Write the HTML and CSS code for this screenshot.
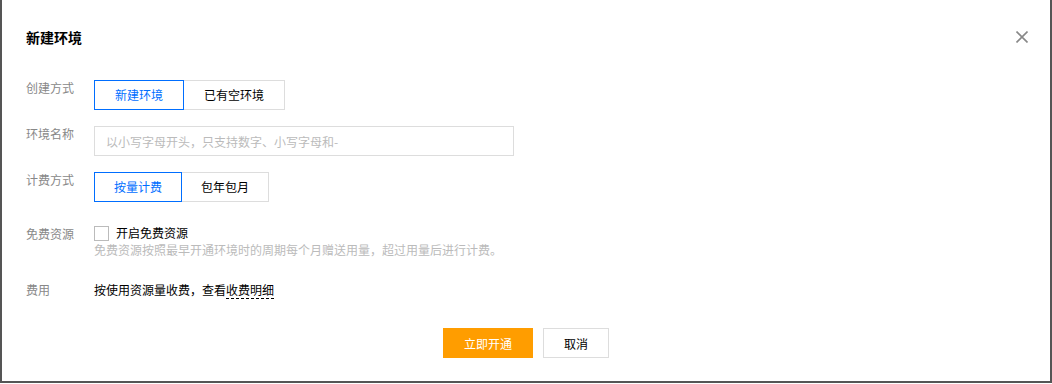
FILE: index.html
```html
<!DOCTYPE html>
<html>
<head>
    <meta charset="utf-8">
    <title>新建环境</title>
    <link rel="stylesheet" href="styles.css">
</head>
<body>
    <div class="dialog">
        <div class="dialog-head">
            <h3 class="dialog-title">新建环境</h3>
            <span class="dialog-close">
                <svg width="12" height="12" viewBox="0 0 12 12"><path d="M0.5 0.5 L11.5 11.5 M11.5 0.5 L0.5 11.5" stroke="#888" stroke-width="1.6" fill="none"/></svg>
            </span>
        </div>

        <div class="form">
            <div class="form-row">
                <label class="form-label">创建方式</label>
                <div class="form-ctrl">
                    <div class="seg seg-wide">
                        <button class="seg-btn active">新建环境</button>
                        <button class="seg-btn">已有空环境</button>
                    </div>
                </div>
            </div>

            <div class="form-row">
                <label class="form-label">环境名称</label>
                <div class="form-ctrl">
                    <input class="text-input" type="text" placeholder="以小写字母开头，只支持数字、小写字母和-">
                </div>
            </div>

            <div class="form-row">
                <label class="form-label">计费方式</label>
                <div class="form-ctrl">
                    <div class="seg">
                        <button class="seg-btn active">按量计费</button>
                        <button class="seg-btn">包年包月</button>
                    </div>
                </div>
            </div>

            <div class="form-row row-free">
                <label class="form-label">免费资源</label>
                <div class="form-ctrl">
                    <div class="check">
                        <span class="check-box"></span>
                        <span>开启免费资源</span>
                    </div>
                    <p class="hint">免费资源按照最早开通环境时的周期每个月赠送用量，超过用量后进行计费。</p>
                </div>
            </div>

            <div class="form-row row-fee">
                <label class="form-label">费用</label>
                <div class="form-ctrl fee-text">
                    按使用资源量收费，查看<span class="dashed">收费明细</span>
                </div>
            </div>
        </div>

        <div class="dialog-foot">
            <button class="btn btn-primary">立即开通</button>
            <button class="btn">取消</button>
        </div>
    </div>
</body>
</html>
```

FILE: styles.css
```css
* { box-sizing: border-box; }

body {
    margin: 0;
    background: #fff;
    font-family: "Noto Sans CJK SC", "Liberation Sans", sans-serif;
    font-size: 12px;
    color: #000;
}

.dialog {
    width: 1052px;
    height: 383px;
    border-left: 2px solid #555;
    border-right: 2px solid #555;
    border-bottom: 2px solid #555;
    background: #fff;
}

.dialog-head {
    display: flex;
    align-items: center;
    justify-content: space-between;
    padding: 27px 22px 0 24px;
    height: 47px;
}
.dialog-title {
    margin: 0;
    font-size: 14px;
    line-height: 20px;
    font-weight: bold;
}
.dialog-close {
    display: flex;
    width: 12px;
    height: 12px;
}

.form {
    padding: 33px 24px 0 24px;
}
.form-row {
    display: flex;
    margin-bottom: 16px;
}
.form-label {
    width: 68px;
    flex: none;
    color: #888;
    line-height: 16px;
}
.form-ctrl {
    flex: none;
}

.seg {
    display: flex;
}
.seg-btn {
    height: 30px;
    padding: 0 19px;
    border: 1px solid #ddd;
    background: #fff;
    font: inherit;
    color: #000;
    line-height: 28px;
}
.seg-wide .seg-btn { padding: 0 20px; }
.seg-btn + .seg-btn { margin-left: -1px; }
.seg-btn.active {
    border-color: #006eff;
    color: #006eff;
    position: relative;
    z-index: 1;
}

.text-input {
    width: 420px;
    height: 30px;
    border: 1px solid #ddd;
    padding: 0 11px;
    font: inherit;
    outline: none;
}
.text-input::placeholder { color: #bbb; }

.row-free { margin-top: 23px; margin-bottom: 24px; }
.row-free .form-label { line-height: 18px; }
.check {
    display: flex;
    align-items: center;
    gap: 7px;
    line-height: 16px;
}
.check-box {
    width: 15px;
    height: 15px;
    border: 1px solid #bbb;
    background: #fff;
}
.hint {
    margin: 1px 0 0 0;
    color: #bbb;
    line-height: 16px;
}

.row-fee { margin-bottom: 0; }
.fee-text { line-height: 16px; }
.dashed {
    border-bottom: 1px dashed #000;
}

.dialog-foot {
    display: flex;
    justify-content: center;
    gap: 10px;
    margin-top: 30px;
}
.btn {
    height: 30px;
    min-width: 66px;
    padding: 0 20px;
    border: 1px solid #ddd;
    background: #fff;
    font: inherit;
    color: #000;
}
.btn-primary {
    width: 90px;
    border-color: #ff9d00;
    background: #ff9d00;
    color: #fff;
}
```
